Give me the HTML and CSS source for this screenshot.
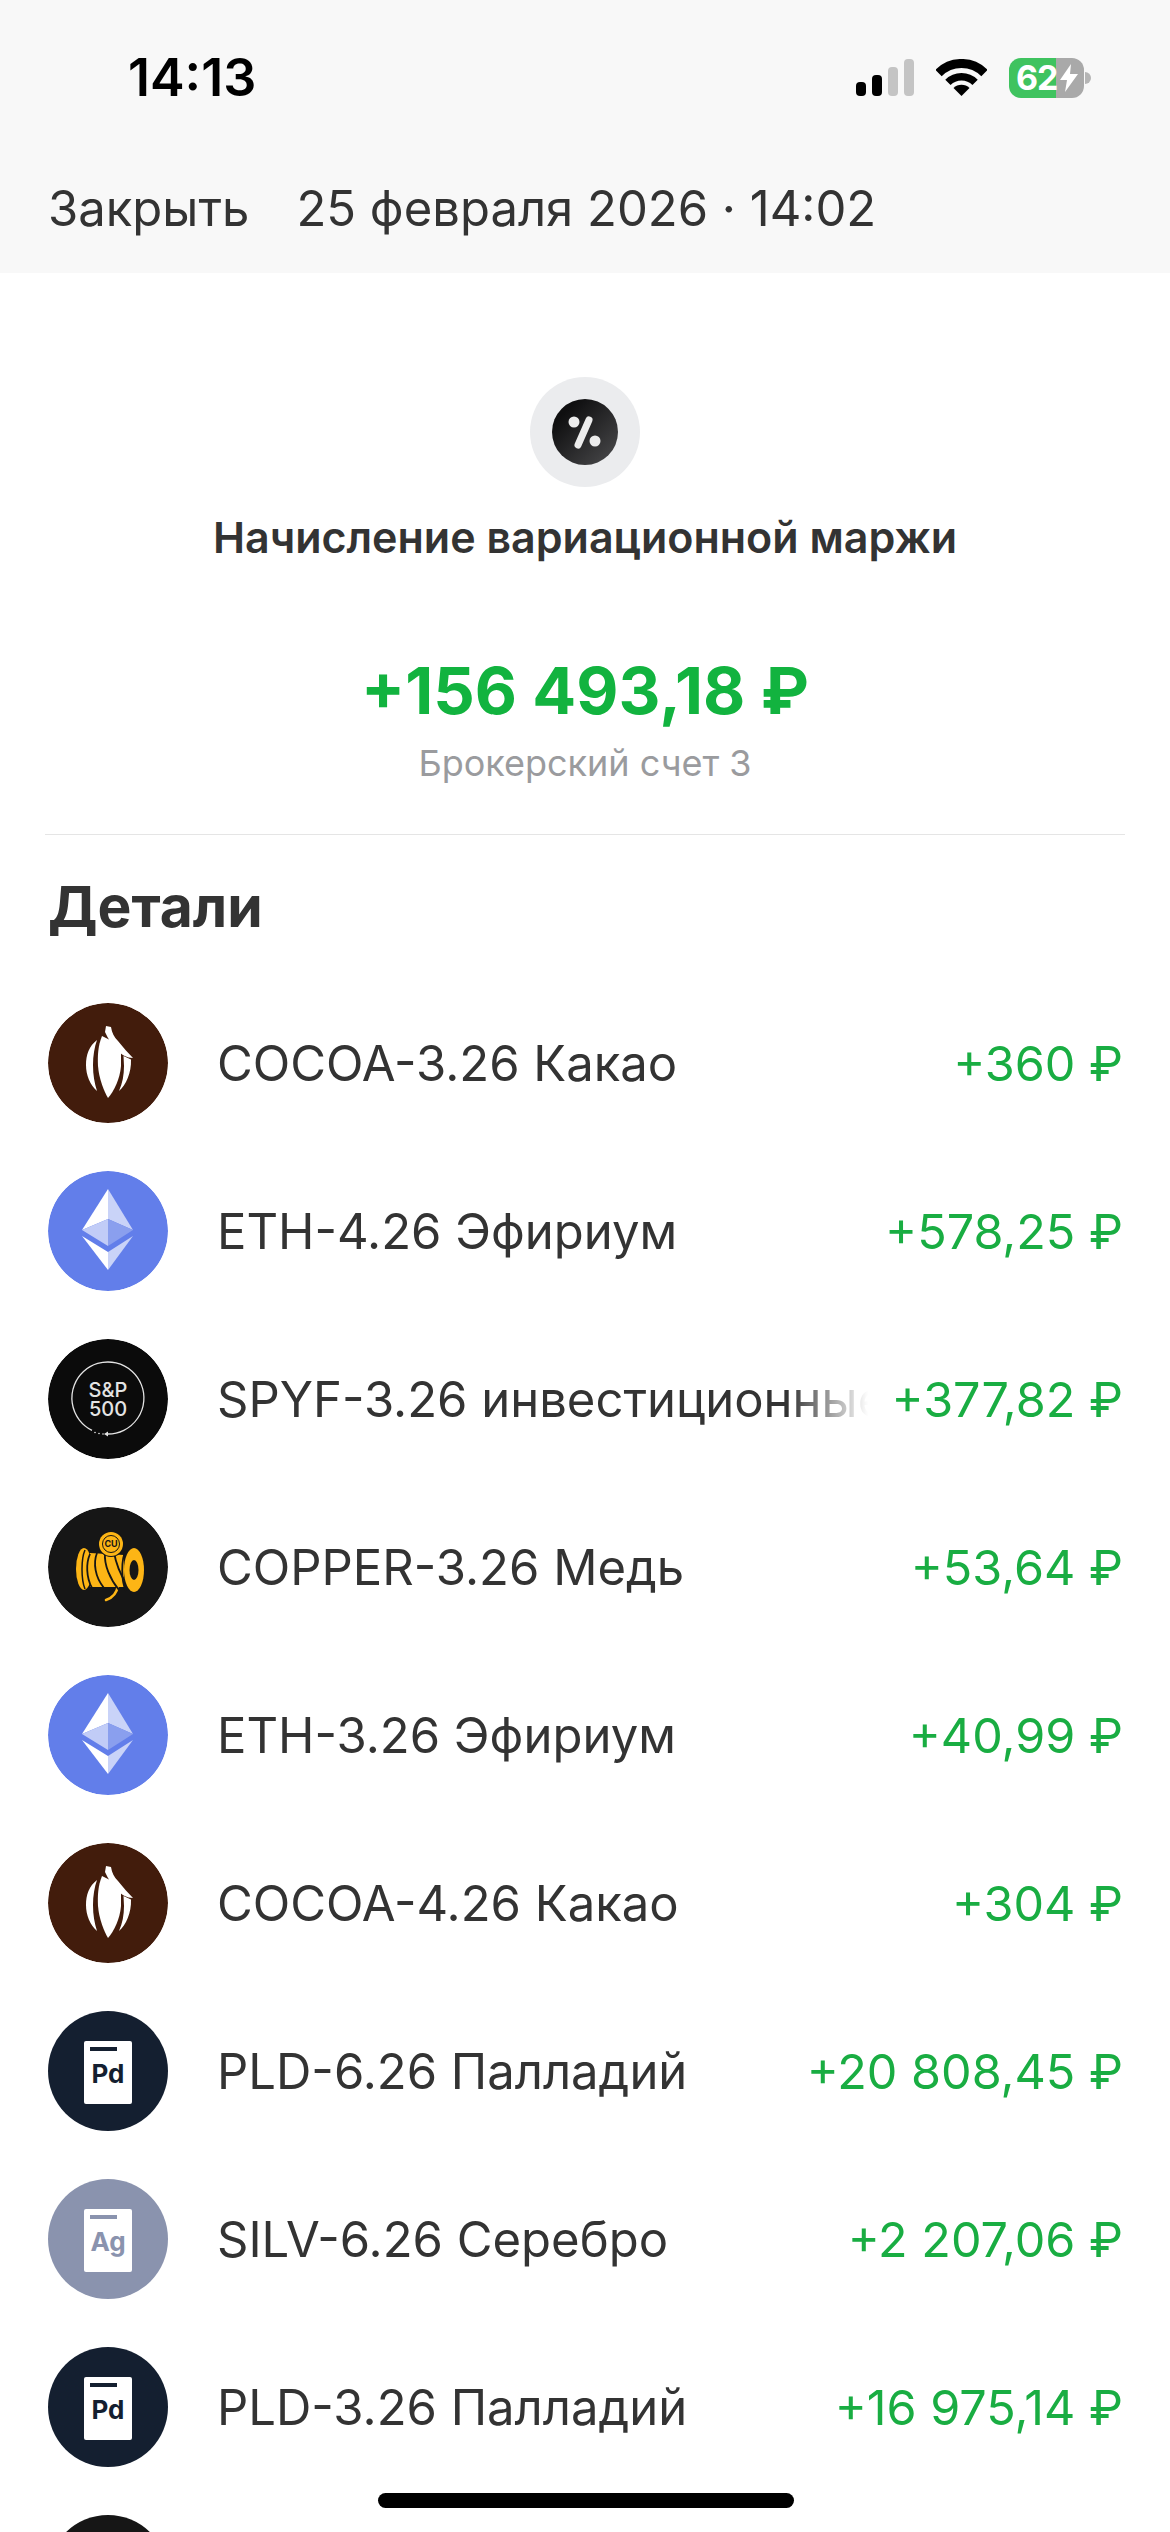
FILE: index.html
```html
<!DOCTYPE html>
<html lang="ru">
<head>
    <meta charset="UTF-8">
    <meta name="viewport" content="width=device-width, initial-scale=1.0">
    <title>Начисление вариационной маржи</title>
    <link rel="stylesheet" href="styles.css">
</head>
<body>

<svg class="defs" width="0" height="0">
    <symbol id="cocoa" viewBox="0 0 120 120">
        <circle cx="60" cy="60" r="60" fill="#421c0c"/>
        <g fill="#fff">
            <path d="M54 33C50 43 49.500 52 50 63C51 76 56 88 60 95C66 88 72 76 73 63L73 50L64 38Z"/>
            <path d="M58 23L63 24C64 30 66 34 70 38C75 44 80 50 85 55C79 55 74 52 70 48C64 42 60 36 57 29Z"/>
            <path d="M49 37C41 43 38 52 38 62C38 72 42 82 49 88C46.500 80 45 72 45 62C45 53 46.500 44 49 37Z"/>
            <path d="M75.500 53L83 56.500C83.500 70 78 82 71 88C74.500 80 76 72 76 63Z"/>
        </g>
    </symbol>
    <symbol id="eth" viewBox="0 0 120 120">
        <circle cx="60" cy="60" r="60" fill="#627eea"/>
        <polygon points="60,18 34,59 60,48" fill="#fff"/>
        <polygon points="60,18 85,59 60,48" fill="#c9d3f8"/>
        <polygon points="34,59 60,48 60,75" fill="#c1ccf7"/>
        <polygon points="85,59 60,48 60,75" fill="#8a9fee"/>
        <polygon points="34,65 60,81 60,99" fill="#fff"/>
        <polygon points="85,65 60,81 60,99" fill="#c9d3f8"/>
    </symbol>
</svg>

<header class="top">
    <div class="status">
        <span class="clock">14:13</span>
        <div class="status-icons">
            <svg class="signal" width="58" height="37" viewBox="0 0 58 37">
                <rect x="0" y="23" width="10" height="14" rx="4" fill="#000"/>
                <rect x="16" y="16" width="10" height="21" rx="4" fill="#000"/>
                <rect x="32" y="8" width="10" height="29" rx="4" fill="#c4c4c4"/>
                <rect x="48" y="0" width="10" height="37" rx="4" fill="#c4c4c4"/>
            </svg>
            <svg class="wifi" width="51" height="37" viewBox="0 0 51 37">
                <path d="M2.500 14A32.500 32.500 0 0 1 48.500 14" fill="none" stroke="#000" stroke-width="9"/>
                <path d="M11.900 23.400A19.250 19.250 0 0 1 39.100 23.400" fill="none" stroke="#000" stroke-width="7.500"/>
                <path d="M25.500 37L17.500 29A11.300 11.300 0 0 1 33.500 29Z" fill="#000"/>
            </svg>
            <div class="battery">
                <div class="battery-body">
                    <span class="battery-level">62</span>
                    <svg class="bolt" width="18" height="28" viewBox="0 0 18 28">
                        <path d="M11 0L0 16H7L5 28L18 10H10Z" fill="#fff"/>
                    </svg>
                </div>
                <div class="battery-nub"></div>
            </div>
        </div>
    </div>
    <nav class="nav">
        <span class="nav-close">Закрыть</span>
        <span class="nav-date">25 февраля 2026 · 14:02</span>
    </nav>
</header>

<main>
    <section class="summary">
        <div class="op-icon">
            <svg width="66" height="66" viewBox="-33 -33 66 66">
                <defs>
                    <linearGradient id="opfill" x1="0" y1="0" x2="1" y2="1">
                        <stop offset="0.200" stop-color="#0f0f10"/>
                        <stop offset="1" stop-color="#4c4c4e"/>
                    </linearGradient>
                </defs>
                <circle r="33" fill="url(#opfill)"/>
                <circle cx="-11" cy="-10" r="5.500" fill="#ececec"/>
                <circle cx="10" cy="9" r="5.500" fill="#ececec"/>
                <path d="M4 -12L-7 13" stroke="#ececec" stroke-width="7" stroke-linecap="round"/>
            </svg>
        </div>
        <h1 class="op-title">Начисление вариационной маржи</h1>
        <div class="op-amount">+156 493,18 ₽</div>
        <div class="op-account">Брокерский счет 3</div>
    </section>

    <h2 class="details-title">Детали</h2>

    <ul class="rows">
        <li class="row">
            <svg class="logo"><use href="#cocoa"/></svg>
            <span class="name">COCOA-3.26 Какао</span>
            <span class="sum">+360 ₽</span>
        </li>
        <li class="row">
            <svg class="logo"><use href="#eth"/></svg>
            <span class="name">ETH-4.26 Эфириум</span>
            <span class="sum">+578,25 ₽</span>
        </li>
        <li class="row">
            <svg class="logo" viewBox="0 0 120 120">
                <circle cx="60" cy="60" r="60" fill="#0b0b0b"/>
                <path d="M60 95A36 36 0 1 0 44 91.300" fill="none" stroke="#e4e4e4" stroke-width="1.300"/>
                <polygon points="60,92.500 60,97.500 56,95" fill="#e4e4e4"/>
                <g fill="#e4e4e4">
                    <circle cx="47" cy="93.500" r=".8"/>
                    <circle cx="51" cy="94.500" r=".8"/>
                    <circle cx="55" cy="95" r=".8"/>
                    <text x="60" y="58" class="spx-text">S&amp;P</text>
                    <text x="60" y="77" class="spx-text">500</text>
                </g>
            </svg>
            <span class="name">SPYF-3.26 инвестиционные</span>
            <span class="sum">+377,82 ₽</span>
        </li>
        <li class="row">
            <svg class="logo" viewBox="0 0 120 120">
                <circle cx="60" cy="60" r="60" fill="#161616"/>
                <path d="M70 78C69 86 64 91 58 93" fill="none" stroke="#fdb515" stroke-width="2.500" stroke-linecap="round"/>
                <ellipse cx="36" cy="62" rx="8" ry="21" fill="#fdb515"/>
                <path d="M37 43C33 52 33 72 37 82" fill="none" stroke="#161616" stroke-width="1.500"/>
                <path d="M42 46L76 48V80L42 80Z" fill="#fdb515"/>
                <path d="M42 47C38 56 38 70 44 81M49 46C45 56 47 70 56 81M57 46C56 58 62 72 71 83M66 45C68 58 74 70 79 78" fill="none" stroke="#161616" stroke-width="1.800"/>
                <ellipse cx="86" cy="63" rx="10" ry="22" fill="#fdb515"/>
                <path d="M78 43C73 52 73 74 78 84" fill="none" stroke="#161616" stroke-width="1.800"/>
                <ellipse cx="86" cy="63" rx="4.500" ry="10" fill="#161616"/>
                <circle cx="63" cy="37" r="13" fill="#161616"/>
                <circle cx="63" cy="37" r="12" fill="#fdb515"/>
                <circle cx="63" cy="37" r="8.500" fill="none" stroke="#161616" stroke-width="1"/>
                <text x="63" y="40" class="cu-text">CU</text>
            </svg>
            <span class="name">COPPER-3.26 Медь</span>
            <span class="sum">+53,64 ₽</span>
        </li>
        <li class="row">
            <svg class="logo"><use href="#eth"/></svg>
            <span class="name">ETH-3.26 Эфириум</span>
            <span class="sum">+40,99 ₽</span>
        </li>
        <li class="row">
            <svg class="logo"><use href="#cocoa"/></svg>
            <span class="name">COCOA-4.26 Какао</span>
            <span class="sum">+304 ₽</span>
        </li>
        <li class="row">
            <div class="metal metal-pd"><div class="ingot"><b>Pd</b></div></div>
            <span class="name">PLD-6.26 Палладий</span>
            <span class="sum">+20 808,45 ₽</span>
        </li>
        <li class="row">
            <div class="metal metal-ag"><div class="ingot"><b>Ag</b></div></div>
            <span class="name">SILV-6.26 Серебро</span>
            <span class="sum">+2 207,06 ₽</span>
        </li>
        <li class="row">
            <div class="metal metal-pd"><div class="ingot"><b>Pd</b></div></div>
            <span class="name">PLD-3.26 Палладий</span>
            <span class="sum">+16 975,14 ₽</span>
        </li>
        <li class="row">
            <div class="metal metal-dark"></div>
        </li>
    </ul>
</main>

<div class="home-bar"></div>

</body>
</html>
```

FILE: styles.css
```css
html, body {
    margin: 0;
    padding: 0;
}
html {
    overflow: hidden;
}
body {
    position: relative;
    width: 1170px;
    height: 2532px;
    overflow: hidden;
    background-color: #fff;
    color: #333;
    font-family: Inter, "Noto Sans", sans-serif;
}
.defs {
    position: absolute;
}
.spx-text {
    font-family: Inter, sans-serif;
    font-size: 20px;
    font-weight: 500;
    text-anchor: middle;
}
.cu-text {
    font-family: Inter, sans-serif;
    font-size: 9px;
    font-weight: 700;
    text-anchor: middle;
    fill: #161616;
}

/* top */
.top {
    height: 273px;
    background-color: #f8f8f8;
}
.status {
    display: flex;
    justify-content: space-between;
    align-items: center;
    height: 155px;
    padding: 0 79px 0 128px;
}
.clock {
    color: #000;
    font-size: 52px;
    font-weight: 600;
}
.status-icons {
    display: flex;
    align-items: center;
    gap: 22px;
}
.signal, .wifi {
    display: block;
}
.battery {
    display: flex;
    align-items: center;
    gap: 1px;
}
.battery-body {
    display: flex;
    align-items: center;
    width: 75px;
    height: 40px;
    box-sizing: border-box;
    padding-left: 7px;
    border-radius: 12px;
    background: linear-gradient(to right, #3fc35f 47px, #a9a9a9 47px);
}
.battery-level {
    width: 44px;
    color: #fff;
    font-size: 34px;
    font-weight: 700;
    line-height: 40px;
    letter-spacing: -1px;
}
.battery-nub {
    width: 6px;
    height: 12px;
    border-radius: 0 6px 6px 0;
    background-color: #b5b5b5;
}
.nav {
    display: flex;
    align-items: center;
    gap: 47px;
    padding-left: 48px;
    font-size: 49px;
    line-height: 108px;
}

/* summary */
.summary {
    display: flex;
    flex-direction: column;
    align-items: center;
    margin: 0 45px;
    padding-top: 104px;
    height: 457px;
    border-bottom: 1px solid #e5e5e5;
}
.op-icon {
    display: flex;
    align-items: center;
    justify-content: center;
    width: 110px;
    height: 110px;
    border-radius: 50%;
    background-color: #ebecee;
}
.op-title {
    margin: 25px 0 0;
    font-size: 43px;
    font-weight: 600;
    line-height: 50px;
}
.op-amount {
    margin-top: 91px;
    color: #12b33f;
    font-size: 65px;
    font-weight: 700;
    line-height: 76px;
}
.op-account {
    margin-top: 12px;
    color: #9a9b9e;
    font-size: 36px;
    line-height: 44px;
}

/* details */
.details-title {
    margin: 0;
    padding: 40px 48px 0;
    font-size: 57px;
    font-weight: 700;
    line-height: 64px;
}
.rows {
    margin: 0;
    padding: 40px 0 0;
    list-style: none;
}
.row {
    display: flex;
    align-items: center;
    gap: 24px;
    height: 168px;
    padding: 0 47px 0 48px;
}
.logo, .metal {
    flex: none;
    width: 120px;
    height: 120px;
    margin-right: 25px;
    border-radius: 50%;
}
.metal {
    display: flex;
    justify-content: center;
    padding-top: 30px;
    box-sizing: border-box;
}
.metal-pd {
    color: #141f30;
    background-color: #141f30;
}
.metal-ag {
    color: #8a93ae;
    background-color: #8a93ae;
}
.metal-dark {
    background-color: #161616;
}
.ingot {
    display: flex;
    flex-direction: column;
    align-items: center;
    width: 48px;
    height: 63px;
    border-radius: 2px;
    background-color: #fff;
    font-size: 26px;
    line-height: 30px;
}
.ingot::before {
    content: "";
    align-self: flex-start;
    width: 27px;
    height: 4px;
    margin: 6px 0 8px 6px;
    background-color: currentColor;
}
.name {
    flex: 1;
    min-width: 0;
    padding-top: 2px;
    overflow: hidden;
    white-space: nowrap;
    font-size: 49px;
    line-height: 60px;
    -webkit-mask-image: linear-gradient(to left, transparent 0, #000 80px);
    mask-image: linear-gradient(to left, transparent 0, #000 80px);
}
.sum {
    flex: none;
    padding-top: 2px;
    color: #19ad42;
    font-size: 48.500px;
    line-height: 60px;
}

.home-bar {
    position: absolute;
    left: 378px;
    bottom: 24px;
    width: 416px;
    height: 15px;
    border-radius: 8px;
    background-color: #000;
}
```
